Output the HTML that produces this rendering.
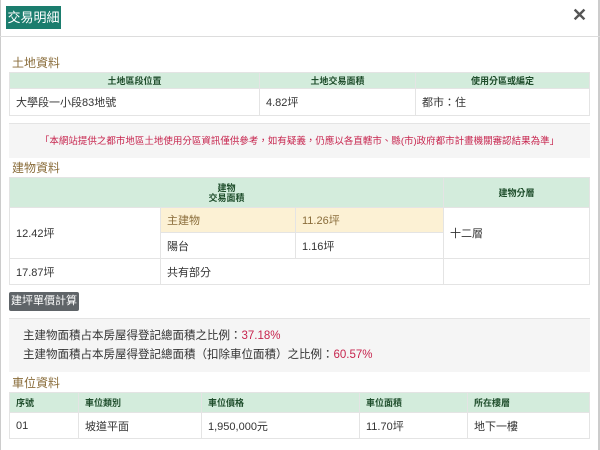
<!DOCTYPE html>
<html><head><meta charset="utf-8"><style>
*{margin:0;padding:0;box-sizing:border-box}
body{width:600px;height:450px;overflow:hidden;background:#fff;font-family:"Liberation Sans","Noto Sans CJK TC",sans-serif;font-size:11px;color:#333;position:relative}
.abs{position:absolute}
.title{left:6px;top:6px;width:55px;height:23px;background:#1b7d6e;color:#fff;font-size:13px;line-height:23px;text-align:center}
.hr{left:0;top:36px;width:600px;height:1px;background:#ddd}
.sec{color:#8a6d3b;font-size:12px;left:12px}
table{position:absolute;left:9px;width:581px;border-collapse:collapse}
td,th{border:1px solid #e4e4e4;padding:0 6px;text-align:left;font-weight:normal}
th{background:#d3ecdc;color:#1e4d2b;font-size:9px;font-weight:bold}
</style></head><body>
<div class="abs" style="left:0;top:0;width:1px;height:450px;background:#ccc"></div>
<div class="abs" style="left:598px;top:0;width:2px;height:450px;background:#ccc"></div>
<div class="abs title">交易明細</div>
<div class="abs" style="left:572px;top:5px;font-size:18px;color:#555;font-weight:bold">✕</div>
<div class="abs hr"></div>
<div class="abs sec" style="top:54px">土地資料</div>
<table style="top:72px">
<tr style="height:16px"><th style="width:250px;text-align:center">土地區段位置</th><th style="width:156px;text-align:center">土地交易面積</th><th style="text-align:center">使用分區或編定</th></tr>
<tr style="height:27px"><td>大學段一小段83地號</td><td>4.82坪</td><td>都市：住</td></tr>
</table>
<div class="abs" style="left:9px;top:123px;width:581px;height:35px;background:#f5f5f5;border-top:1px solid #e4e4e4;color:#c7254e;font-size:9.5px;text-align:center;line-height:35px">「本網站提供之都市地區土地使用分區資訊僅供參考，如有疑義，仍應以各直轄市、縣(市)政府都市計畫機關審認結果為準」</div>
<div class="abs sec" style="top:159px">建物資料</div>
<table style="top:177px">
<tr style="height:30px"><th colspan="3" style="text-align:center;line-height:10px">建物<br>交易面積</th><th style="text-align:center">建物分層</th></tr>
<tr style="height:25px"><td rowspan="2" style="width:151px">12.42坪</td><td style="width:135px;background:#fcf1d4;color:#8a6d3b">主建物</td><td style="width:148px;background:#fcf1d4;color:#8a6d3b">11.26坪</td><td rowspan="2">十二層</td></tr>
<tr style="height:26px"><td>陽台</td><td>1.16坪</td></tr>
<tr style="height:26px"><td>17.87坪</td><td colspan="2">共有部分</td><td></td></tr>
</table>
<div class="abs" style="left:9px;top:292px;width:70px;height:19px;background:#5f6468;color:#fff;border-radius:2px;font-size:11px;line-height:19px;text-align:center">建坪單價計算</div>
<div class="abs" style="left:9px;top:318px;width:581px;height:54px;background:#f5f5f5;border-top:1px solid #e4e4e4;font-size:11.5px;line-height:19px;padding:8px 0 0 14px">主建物面積占本房屋得登記總面積之比例：<span style="color:#c7254e">37.18%</span><br>主建物面積占本房屋得登記總面積（扣除車位面積）之比例：<span style="color:#c7254e">60.57%</span></div>
<div class="abs sec" style="top:374px">車位資料</div>
<table style="top:392px">
<tr style="height:20px"><th style="width:69px">序號</th><th style="width:123px">車位類別</th><th style="width:158px">車位價格</th><th style="width:108px">車位面積</th><th>所在樓層</th></tr>
<tr style="height:26px"><td>01</td><td>坡道平面</td><td>1,950,000元</td><td>11.70坪</td><td>地下一樓</td></tr>
</table>
</body></html>
